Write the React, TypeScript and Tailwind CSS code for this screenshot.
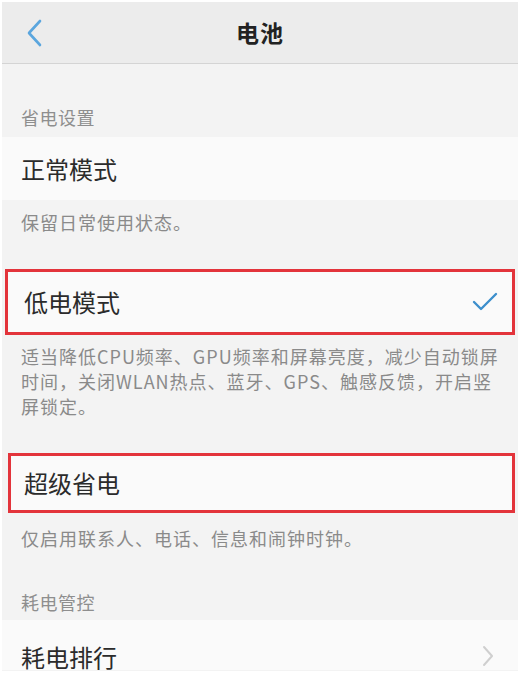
import React from 'react';

const font = { fontFamily: '"Noto Sans CJK SC", "Noto Sans", sans-serif' };

const SectionLabel: React.FC<{ text: string; className?: string }> = ({ text, className }) => (
  <div className={`px-[19px] text-[18px] leading-[24px] tracking-[0.5px] text-[#8e8e8e] ${className ?? ''}`}>{text}</div>
);

const Desc: React.FC<{ children: React.ReactNode; className?: string }> = ({ children, className }) => (
  <div className={`px-[19px] text-[18px] leading-[25px] tracking-[1px] text-[#8a8a8a] whitespace-nowrap ${className ?? ''}`}>{children}</div>
);

const App: React.FC = () => {
  return (
    <div className="w-[520px] h-[674px] bg-white p-[2px] pb-[3px]" style={font}>
      <div className="h-full flex flex-col bg-[#f3f3f3] overflow-hidden">
        {/* header */}
        <div className="relative h-[62px] shrink-0 flex items-center justify-center bg-[#ececec] border-b border-[#d4d4d4]">
          <svg className="absolute left-[23px] top-[17px]" width="18" height="28" viewBox="0 0 18 28">
            <path d="M15 2 L4 14 L15 26" fill="none" stroke="#5ba6de" strokeWidth="2.6" strokeLinecap="round" strokeLinejoin="round" />
          </svg>
          <span className="text-[23px] font-bold text-[#222] tracking-[1px]">电池</span>
        </div>

        <SectionLabel text="省电设置" className="pt-[41px] pb-[8px]" />

        <div className="h-[63px] shrink-0 flex items-center px-[19px] bg-[#fafafa]">
          <span className="text-[24px] text-[#2b2b2b]">正常模式</span>
        </div>

        <Desc className="pt-[10px] pb-[34px]">保留日常使用状态。</Desc>

        <div className="mx-[3px] h-[66px] shrink-0 flex items-center justify-between pl-[16px] pr-[14px] bg-[#fafafa] border-[3px] border-[#e3343b]">
          <span className="text-[24px] text-[#2b2b2b]">低电模式</span>
          <svg width="26" height="20" viewBox="0 0 26 20">
            <path d="M2 10 L9 17 L24 2" fill="none" stroke="#3d8fcc" strokeWidth="2.4" strokeLinecap="round" strokeLinejoin="round" />
          </svg>
        </div>

        <Desc className="pt-[9px] pb-[34px]">
          适当降低CPU频率、GPU频率和屏幕亮度，减少自动锁屏
          <br />
          时间，关闭WLAN热点、蓝牙、GPS、触感反馈，开启竖
          <br />
          屏锁定。
        </Desc>

        <div className="ml-[6px] mr-[3px] h-[60px] shrink-0 flex items-center pl-[13px] bg-[#fafafa] border-[3px] border-[#e3343b]">
          <span className="text-[24px] text-[#2b2b2b]">超级省电</span>
        </div>

        <Desc className="pt-[13px]">仅启用联系人、电话、信息和闹钟时钟。</Desc>

        <SectionLabel text="耗电管控" className="pt-[39px] pb-[6px]" />

        <div className="h-[50px] shrink-0 flex items-end justify-between px-[19px] bg-[#fafafa]">
          <span className="text-[24px] leading-[26px] text-[#2b2b2b]">耗电排行</span>
          <svg width="14" height="22" viewBox="0 0 14 22" className="mr-[4px] mb-[3px]">
            <path d="M3 2 L11 11 L3 20" fill="none" stroke="#cfcfcf" strokeWidth="2" strokeLinecap="round" strokeLinejoin="round" />
          </svg>
        </div>
      </div>
    </div>
  );
};

export default App;
